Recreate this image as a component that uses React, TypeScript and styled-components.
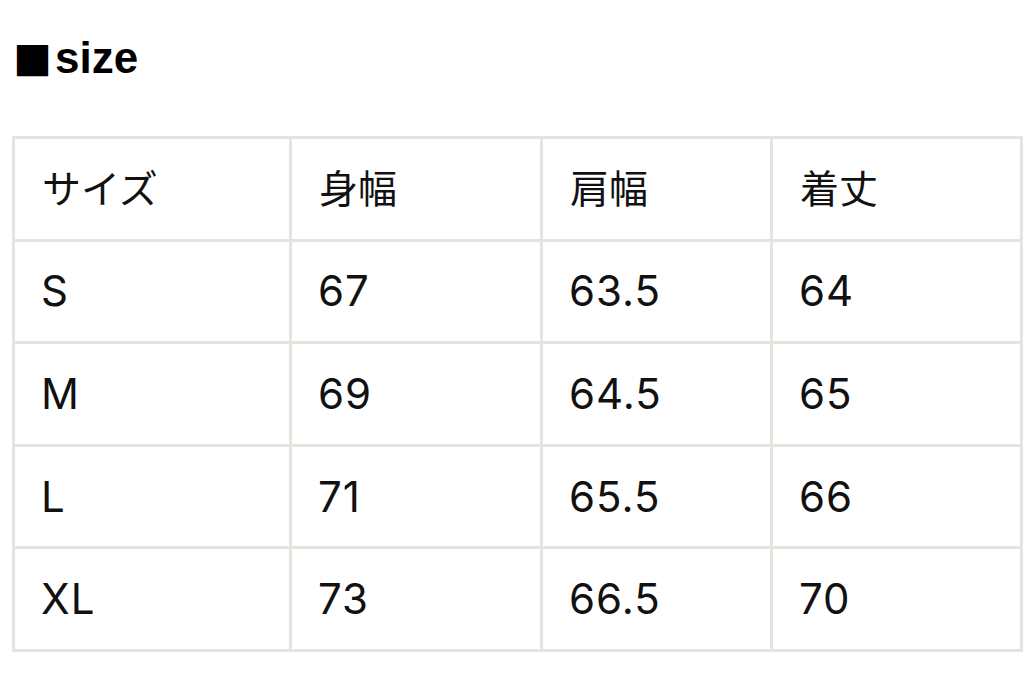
import styled, { createGlobalStyle } from "styled-components";

const GlobalStyle = createGlobalStyle`
  html, body {
    margin: 0;
    padding: 0;
    background: #fff;
  }
  body {
    font-family: Inter, "Noto Sans CJK JP", sans-serif;
    color: #111;
  }
`

const Page = styled.div`
  padding: 36px 0 0 12px;
`

const Heading = styled.h2`
  margin: 0 0 56px;
  padding-left: 1px;
  font-family: "Liberation Sans", "Noto Sans CJK JP", sans-serif;
  font-size: 44px;
  line-height: 44px;
  font-weight: 700;
  color: #000;
  display: flex;
  align-items: center;
`

const Mark = styled.span`
  font-family: "Noto Sans CJK JP", sans-serif;
  font-size: 39px;
  margin-right: 3px;
`

const SizeTable = styled.table`
  width: 1011px;
  table-layout: fixed;
  border-collapse: separate;
  border-spacing: 3px;
  background: #e6e4df;
`

const Cell = styled.td<{ $head?: boolean }>`
  box-sizing: border-box;
  height: 99.6px;
  padding: 0 0 0 ${(p) => (p.$head ? 27 : 26)}px;
  background: #fff;
  font-size: ${(p) => (p.$head ? 39 : 42)}px;
  font-weight: 400;
  letter-spacing: ${(p) => (p.$head ? 0 : 1)}px;
  line-height: 1;
  vertical-align: middle;
  text-align: left;
  white-space: nowrap;
`

const columns = [274, 248, 227, 247];

const rows = [
  ["サイズ", "身幅", "肩幅", "着丈"],
  ["S", "67", "63.5", "64"],
  ["M", "69", "64.5", "65"],
  ["L", "71", "65.5", "66"],
  ["XL", "73", "66.5", "70"],
];

const App = () => {
  return <>
    <GlobalStyle />
    <Page>
      <Heading><Mark>■</Mark>size</Heading>
      <SizeTable>
        <colgroup>
          {columns.map((w, i) => <col key={i} style={{ width: w }} />)}
        </colgroup>
        <tbody>
          {rows.map((row, r) => <tr key={r}>
            {row.map((text, c) => <Cell key={c} $head={r === 0}>{text}</Cell>)}
          </tr>)}
        </tbody>
      </SizeTable>
    </Page>
  </>
}

export default App;
